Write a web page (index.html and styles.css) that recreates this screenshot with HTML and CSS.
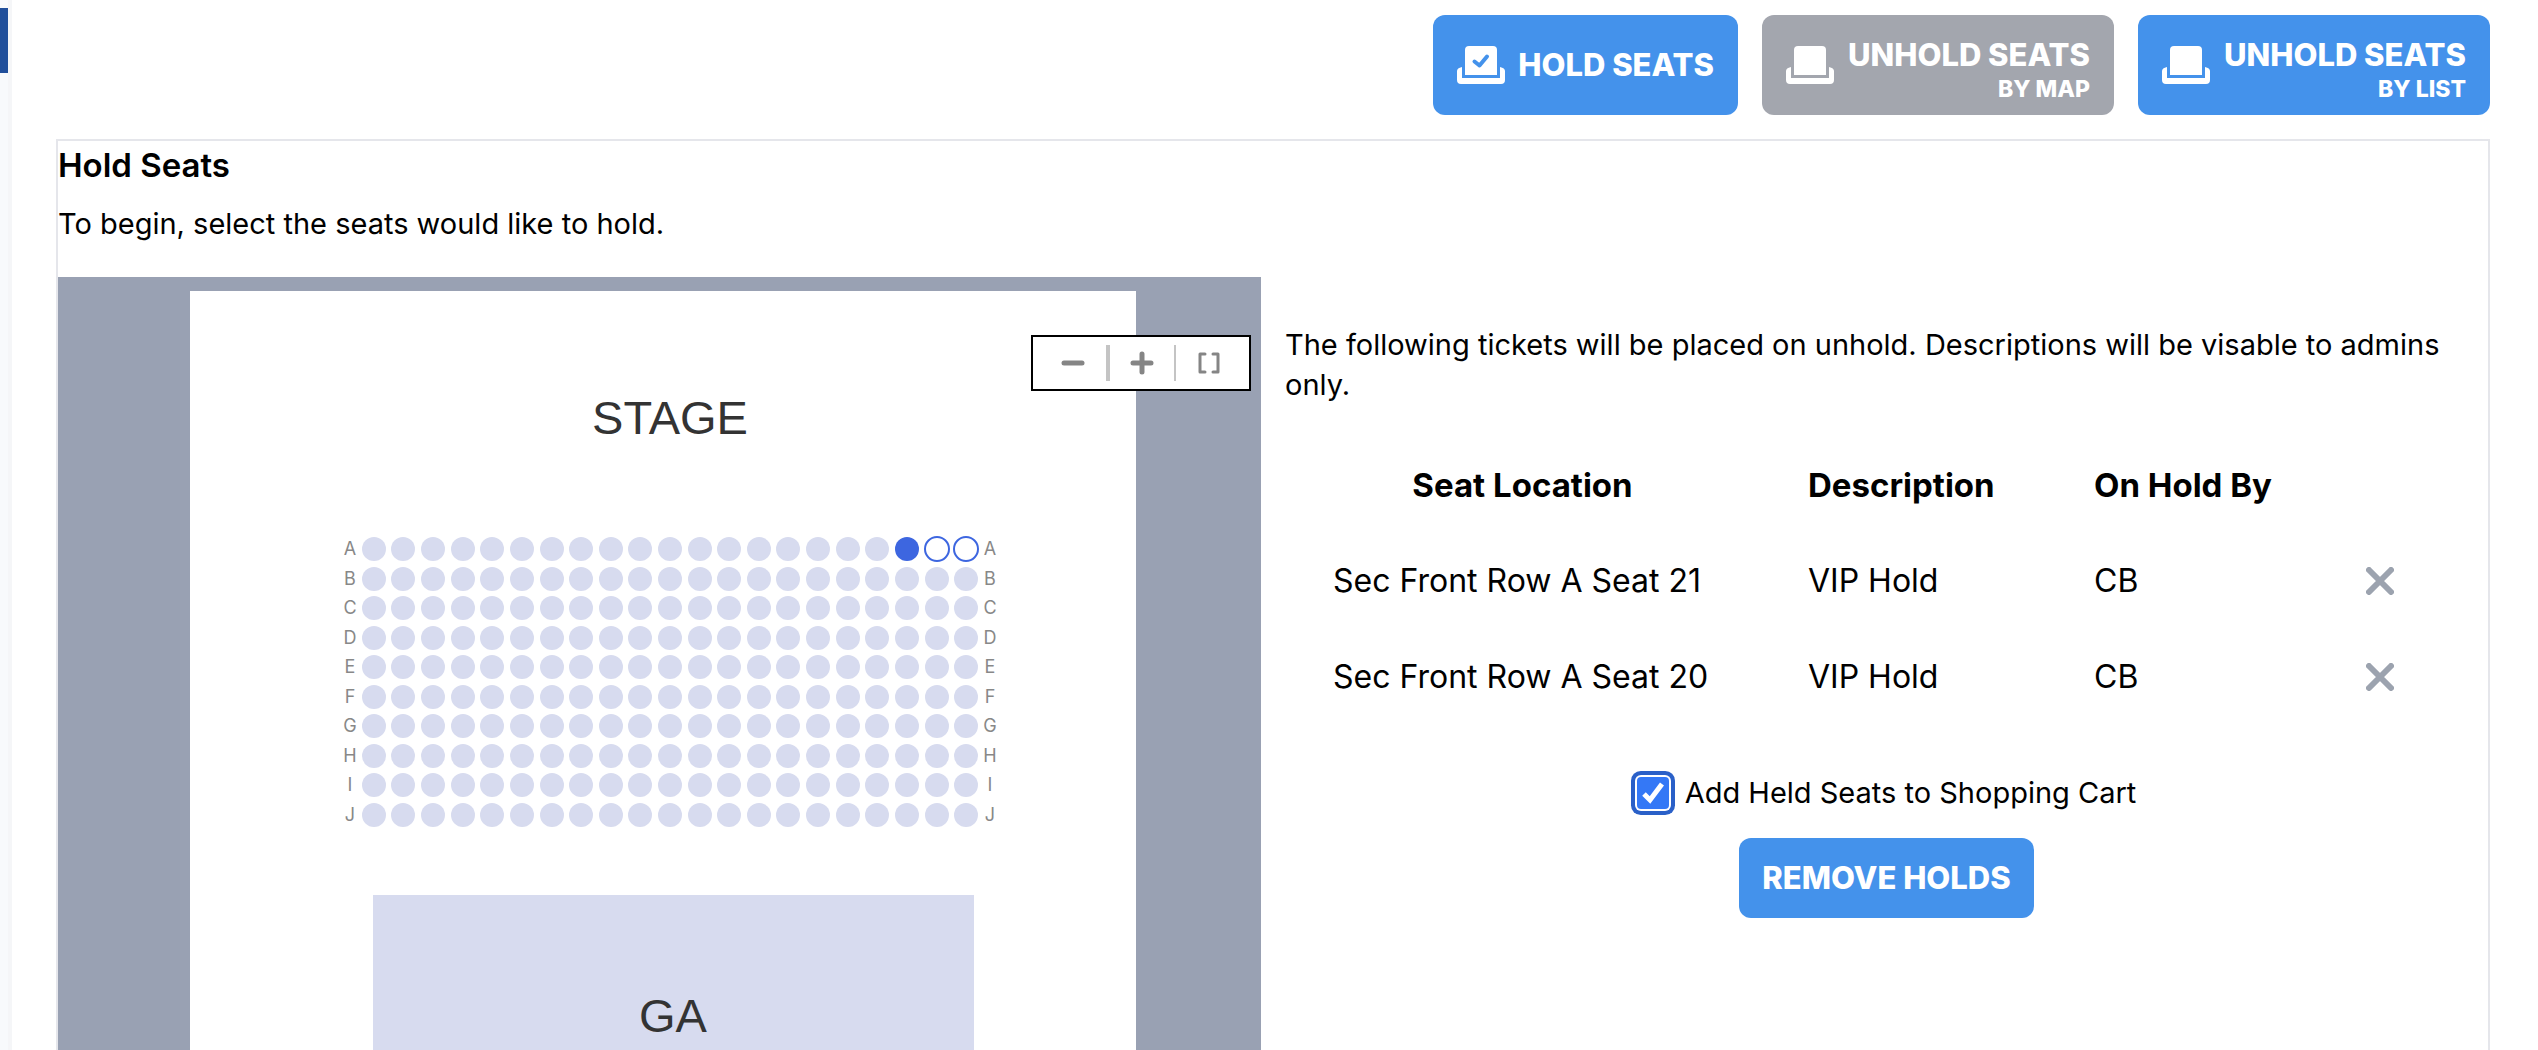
FILE: index.html
```html
<!DOCTYPE html>
<html lang="en">
<head>
  <meta charset="UTF-8">
  <title>Hold Seats</title>
  <link rel="stylesheet" href="styles.css">
</head>
<body>

  <aside class="sidebar">
    <div class="sidebar-active"></div>
  </aside>

  <main class="page">

    <div class="actions">
      <button class="btn btn-hold">
        <svg class="seat-icon" viewBox="0 0 48 40" aria-hidden="true">
          <path d="M12 1h24a4 4 0 0 1 4 4v25H8V5a4 4 0 0 1 4-4z" fill="currentColor"/>
          <path d="M0 26q0-3 5-4v11h38V22q5 1 5 4v9a4 4 0 0 1-4 4H4a4 4 0 0 1-4-4z" fill="currentColor"/>
          <path d="M17.500 16.500l5 4 7.500-9" class="seat-check"/>
        </svg>
        <span>HOLD SEATS</span>
      </button>
      <button class="btn btn-unhold btn-disabled">
        <svg class="seat-icon" viewBox="0 0 48 40" aria-hidden="true">
          <path d="M12 1h24a4 4 0 0 1 4 4v25H8V5a4 4 0 0 1 4-4z" fill="currentColor"/>
          <path d="M0 26q0-3 5-4v11h38V22q5 1 5 4v9a4 4 0 0 1-4 4H4a4 4 0 0 1-4-4z" fill="currentColor"/>
        </svg>
        <span class="btn-lines">UNHOLD SEATS <small>BY MAP</small></span>
      </button>
      <button class="btn btn-unhold">
        <svg class="seat-icon" viewBox="0 0 48 40" aria-hidden="true">
          <path d="M12 1h24a4 4 0 0 1 4 4v25H8V5a4 4 0 0 1 4-4z" fill="currentColor"/>
          <path d="M0 26q0-3 5-4v11h38V22q5 1 5 4v9a4 4 0 0 1-4 4H4a4 4 0 0 1-4-4z" fill="currentColor"/>
        </svg>
        <span class="btn-lines">UNHOLD SEATS <small>BY LIST</small></span>
      </button>
    </div>

    <section class="card">
      <h1>Hold Seats</h1>
      <p class="intro">To begin, select the seats would like to hold.</p>

      <div class="columns">
        <div class="map">
          <div class="sheet">
            <div class="stage">STAGE</div>
            <div class="rows" id="rows"></div>
            <div class="ga">GA</div>
          </div>

          <div class="zoom">
            <button aria-label="Zoom out">
              <svg viewBox="0 0 24 24"><path d="M3 12h18" stroke-width="5"/></svg>
            </button>
            <button aria-label="Zoom in">
              <svg viewBox="0 0 24 24"><path d="M3 12h18M12 3v18" stroke-width="5"/></svg>
            </button>
            <button aria-label="Fit to screen">
              <svg viewBox="0 0 24 24"><path d="M8 3H3v18h5M16 3h5v18h-5" stroke-width="3"/></svg>
            </button>
          </div>
        </div>

        <div class="holds">
          <p>The following tickets will be placed on unhold. Descriptions will be visable to admins only.</p>

          <table>
            <thead>
              <tr>
                <th class="col-seat">Seat Location</th>
                <th class="col-desc">Description</th>
                <th class="col-by">On Hold By</th>
                <td></td>
              </tr>
            </thead>
            <tbody>
              <tr>
                <td>Sec Front Row A Seat 21</td>
                <td>VIP Hold</td>
                <td>CB</td>
                <td>
                  <button class="remove" aria-label="Remove seat 21">
                    <svg viewBox="0 0 28 28"><path d="M3 3l22 22M25 3L3 25"/></svg>
                  </button>
                </td>
              </tr>
              <tr>
                <td>Sec Front Row A Seat 20</td>
                <td>VIP Hold</td>
                <td>CB</td>
                <td>
                  <button class="remove" aria-label="Remove seat 20">
                    <svg viewBox="0 0 28 28"><path d="M3 3l22 22M25 3L3 25"/></svg>
                  </button>
                </td>
              </tr>
            </tbody>
          </table>

          <div class="cart">
            <span class="check">
              <input type="checkbox" id="addToCart" checked>
              <svg viewBox="0 0 32 32" aria-hidden="true"><path d="M7 17l6 6L25 7"/></svg>
            </span>
            <label for="addToCart">Add Held Seats to Shopping Cart</label>
          </div>

          <button class="btn btn-remove">REMOVE HOLDS</button>
        </div>
      </div>
    </section>

  </main>

  <script>
    const rows = document.getElementById("rows");
    const seatsPerRow = 21;
    const seatState = { A19: "selected", A20: "held", A21: "held" };

    for (const letter of "ABCDEFGHIJ") {
      let html = `<span>${letter}</span>`;
      for (let i = 1; i <= seatsPerRow; i++) {
        const state = seatState[letter + i] || "";
        html += `<button class="seat ${state}" aria-label="Row ${letter} Seat ${i}"></button>`;
      }
      html += `<span>${letter}</span>`;

      const row = document.createElement("div");
      row.className = "row";
      row.innerHTML = html;
      rows.appendChild(row);
    }
  </script>

</body>
</html>
```
FILE: styles.css
```css
* {
  box-sizing: border-box;
}

body {
  display: flex;
  height: 100vh;
  margin: 0;
  overflow: hidden;
  font-family: 'Inter', sans-serif;
  font-size: 29px;
  line-height: 40px;
  color: #000;
  background-color: white;
}

button {
  padding: 0;
  border: none;
  background: none;
  font-family: inherit;
  cursor: pointer;
}

h1,
p {
  margin: 0;
}

.sidebar {
  flex: none;
  width: 12px;
  padding-top: 8px;
  background-color: #f8fafc;
  border-right: 4px solid #f5f6f8;
}

.sidebar-active {
  height: 65px;
  background-color: #204f9b;
}

.page {
  display: flex;
  flex-direction: column;
  flex: 1;
  gap: 24px;
  padding: 15px 48px 0 44px;
}

/* top buttons */
.actions {
  display: flex;
  justify-content: flex-end;
  gap: 24px;
}

.btn {
  display: flex;
  align-items: center;
  justify-content: space-between;
  padding: 0 24px;
  border-radius: 12px;
  background-color: #4492eb;
  color: white;
  font-size: 31px;
  font-weight: 800;
  line-height: 40px;
  white-space: nowrap;
}

.btn-hold {
  width: 305px;
  height: 100px;
}

.btn-unhold {
  width: 352px;
  height: 100px;
}

.btn-disabled {
  background-color: #a3a6ae;
}

.btn-lines {
  padding-top: 8px;
  text-align: right;
}

.btn-lines small {
  display: block;
  font-size: 23px;
  line-height: 28px;
}

.seat-icon {
  flex: none;
  width: 48px;
  height: 40px;
}

.seat-check {
  fill: none;
  stroke: #4492eb;
  stroke-width: 4;
  stroke-linecap: round;
  stroke-linejoin: round;
}

/* main card */
.card {
  display: flex;
  flex-direction: column;
  flex: 1;
  border: 2px solid #e5e6eb;
  border-bottom: none;
}

h1 {
  font-size: 33px;
  font-weight: 600;
  line-height: 48px;
}

.intro {
  padding: 15px 0 33px;
}

.columns {
  display: grid;
  grid-template-columns: 1fr 1fr;
  gap: 24px;
  flex: 1;
}

/* seat map */
.map {
  position: relative;
  display: flex;
  padding: 14px 125px 0 132px;
  background-color: #99a1b3;
}

.sheet {
  display: flex;
  flex-direction: column;
  align-items: center;
  flex: 1;
  padding: 99px 0 0 14px;
  background-color: white;
  color: #333;
  font-family: 'Liberation Sans', sans-serif;
  font-size: 47px;
  line-height: 56px;
}

.rows {
  display: flex;
  flex-direction: column;
  justify-content: space-between;
  width: 658px;
  height: 290px;
  margin: 91px 0 68px;
}

/* label, 21 seats, label */
.row {
  display: grid;
  grid-template-columns: 18px repeat(21, 1fr) 18px;
  justify-items: center;
  color: #888;
  font-family: 'Inter', sans-serif;
  font-size: 18px;
  line-height: 24px;
}

.seat {
  width: 24px;
  height: 24px;
  border-radius: 50%;
  background-color: #d7dbef;
}

.seat.selected {
  background-color: #3d66e0;
}

.seat.held {
  width: 26px;
  height: 26px;
  margin: -1px;
  border: 2px solid #3d66e0;
  background-color: white;
}

.ga {
  flex: 1;
  width: 601px;
  margin-left: 6px;
  padding-top: 93px;
  background-color: #d7dbef;
  text-align: center;
}

.zoom {
  position: absolute;
  top: 58px;
  right: 10px;
  display: flex;
  align-items: center;
  width: 220px;
  height: 56px;
  padding: 0 8px;
  border: 2px solid #000;
  background-color: white;
}

.zoom button {
  display: flex;
  align-items: center;
  justify-content: center;
  flex: 1;
  height: 36px;
}

.zoom button:nth-child(1) {
  border-right: 4px solid #c4c4c4;
}

.zoom button:nth-child(2) {
  border-right: 2px solid #c4c4c4;
}

.zoom svg {
  width: 24px;
  height: 24px;
  fill: none;
  stroke: #858585;
  stroke-linecap: round;
  stroke-linejoin: round;
}

/* list of holds */
.holds {
  display: flex;
  flex-direction: column;
  align-items: center;
  padding-top: 48px;
}

.holds p {
  align-self: flex-start;
  margin-bottom: 32px;
  padding-right: 24px;
}

table {
  align-self: flex-start;
  border-collapse: collapse;
  table-layout: fixed;
  width: 1155px;
  font-size: 32px;
  line-height: 48px;
}

th,
td {
  height: 96px;
  padding: 0 48px;
  text-align: left;
  white-space: nowrap;
}

th {
  font-size: 33px;
}

.col-seat {
  width: 475px;
  text-align: center;
}

.col-desc {
  width: 286px;
}

.col-by {
  width: 272px;
}

.remove {
  display: block;
}

.remove svg {
  display: block;
  width: 28px;
  height: 28px;
  fill: none;
  stroke: #9ca3af;
  stroke-width: 6;
  stroke-linecap: round;
}

.cart {
  display: flex;
  align-items: center;
  gap: 16px;
  margin: 48px 0 25px;
}

.check {
  position: relative;
  width: 32px;
  height: 32px;
}

.check input {
  appearance: none;
  display: block;
  width: 32px;
  height: 32px;
  margin: 0;
  border-radius: 4px;
  background-color: white;
  box-shadow: 0 0 0 2px white, 0 0 0 6px #2a60c8;
}

.check input:checked {
  background-color: #3478f6;
}

.check svg {
  position: absolute;
  inset: 0;
  fill: none;
  stroke: white;
  stroke-width: 5;
  pointer-events: none;
}

.check input:not(:checked) + svg {
  display: none;
}

.btn-remove {
  justify-content: center;
  width: 295px;
  height: 80px;
}
```
